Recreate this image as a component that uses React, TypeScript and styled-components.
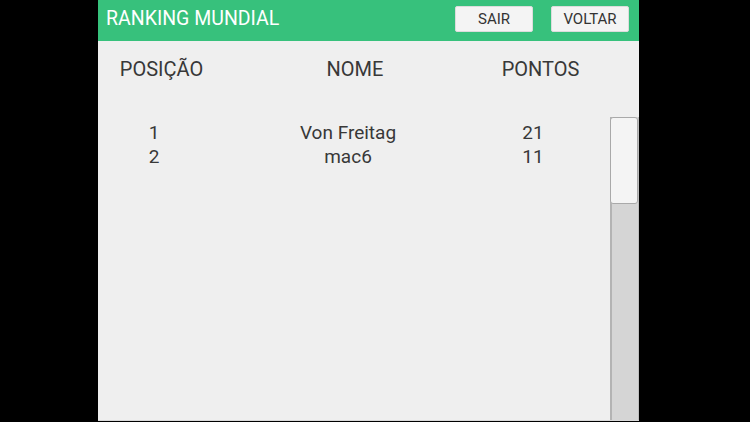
import React from "react";
import styled, { createGlobalStyle } from "styled-components";

const Global = createGlobalStyle`
  html, body { margin: 0; padding: 0; background: #000; }
  body { font-family: Roboto, "Liberation Sans", Arial, sans-serif; }
`;

const Screen = styled.div`
  width: 750px;
  height: 422px;
  background: #000;
  display: flex;
  justify-content: flex-start;
  padding-left: 98px;
  box-sizing: border-box;
  overflow: hidden;
`;

const Panel = styled.div`
  width: 541px;
  height: 420px;
  background: #efefef;
  border-bottom: 1px solid #d8d8d8;
  display: flex;
  flex-direction: column;
`;

const Header = styled.div`
  height: 41px;
  background: #37c17c;
  display: flex;
  align-items: center;
  padding: 0 10px 0 8px;
  box-sizing: border-box;
`;

const Title = styled.div`
  flex: 1;
  color: #ffffff;
  font-size: 19.5px;
  line-height: 24px;
  margin-top: -4px;
`;

const Button = styled.button<{ $gap: number }>`
  width: 78px;
  height: 26px;
  margin-left: ${(p) => p.$gap}px;
  margin-top: -3px;
  background: #f4f4f4;
  border: 1px solid #dcdcdc;
  border-radius: 2px;
  color: #333;
  font-family: Roboto, "Liberation Sans", Arial, sans-serif;
  font-size: 15px;
  padding: 0;
  display: flex;
  align-items: center;
  justify-content: center;
`;

const Columns = styled.div`
  display: grid;
  grid-template-columns: 127px 260px 111px;
  margin-top: 16px;
  color: #383838;
  font-size: 20px;
  line-height: 24px;
`;

const Cell = styled.div`
  text-align: center;
  white-space: nowrap;
`;

const ListArea = styled.div`
  margin-top: 36px;
  flex: 1;
  display: flex;
  min-height: 0;
`;

const Rows = styled.div`
  flex: 1;
  padding-top: 4px;
`;

const Row = styled.div`
  display: grid;
  grid-template-columns: 112px 276px 94px;
  color: #383838;
  font-size: 19px;
  line-height: 24px;
`;

const Track = styled.div`
  width: 29px;
  background: #d5d5d5;
  border-left: 2px solid #b3b3b3;
  border-right: 1px solid #bdbdbd;
  box-sizing: border-box;
  position: relative;
`;

const Thumb = styled.div`
  position: absolute;
  top: 0;
  left: -2px;
  width: 28px;
  height: 87px;
  background: #f4f4f4;
  border: 1px solid #a9a9a9;
  border-radius: 3px;
  box-sizing: border-box;
`;

const data = [
  { pos: 1, name: "Von Freitag", pts: 21 },
  { pos: 2, name: "mac6", pts: 11 },
];

export default function App() {
  return (
    <>
      <Global />
      <Screen>
        <Panel>
          <Header>
            <Title>RANKING MUNDIAL</Title>
            <Button $gap={0}>SAIR</Button>
            <Button $gap={18}>VOLTAR</Button>
          </Header>
          <Columns>
            <Cell>POSIÇÃO</Cell>
            <Cell>NOME</Cell>
            <Cell>PONTOS</Cell>
          </Columns>
          <ListArea>
            <Rows>
              {data.map((d) => (
                <Row key={d.pos}>
                  <Cell>{d.pos}</Cell>
                  <Cell>{d.name}</Cell>
                  <Cell>{d.pts}</Cell>
                </Row>
              ))}
            </Rows>
            <Track>
              <Thumb />
            </Track>
          </ListArea>
        </Panel>
      </Screen>
    </>
  );
}
